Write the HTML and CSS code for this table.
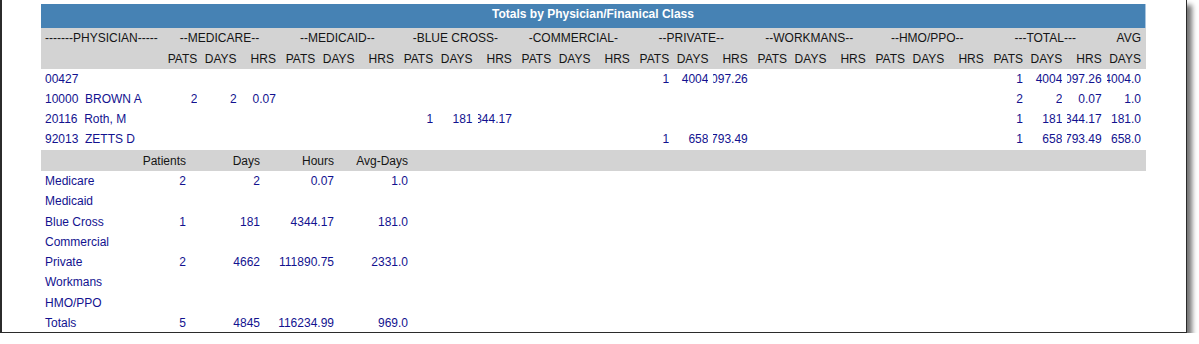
FILE: index.html
```html
<!DOCTYPE html>
<html>
<head>
<meta charset="utf-8">
<title>Totals by Physician/Finanical Class</title>
<link rel="stylesheet" href="styles.css">
</head>
<body>
<div class="frame">
  <div class="report">
    <div class="title">Totals by Physician/Finanical Class</div>
    <table class="main">
      <colgroup>
        <col class="phys">
        <col class="c"><col class="c"><col class="c">
        <col class="c"><col class="c"><col class="c">
        <col class="c"><col class="c"><col class="c">
        <col class="c"><col class="c"><col class="c">
        <col class="c"><col class="c"><col class="c">
        <col class="c"><col class="c"><col class="c">
        <col class="c"><col class="c"><col class="c">
        <col class="c"><col class="c"><col class="c">
        <col class="c">
      </colgroup>
      <thead>
        <tr class="h1">
          <th class="l">-------PHYSICIAN-----</th>
          <th colspan="3" class="g">--MEDICARE--</th>
          <th colspan="3" class="g">--MEDICAID--</th>
          <th colspan="3" class="g">-BLUE CROSS-</th>
          <th colspan="3" class="g">-COMMERCIAL-</th>
          <th colspan="3" class="g">--PRIVATE--</th>
          <th colspan="3" class="g">--WORKMANS--</th>
          <th colspan="3" class="g">--HMO/PPO--</th>
          <th colspan="3" class="g">---TOTAL---</th>
          <th class="r">AVG</th>
        </tr>
        <tr class="h2">
          <th></th>
          <th class="r">PATS</th><th class="r">DAYS</th><th class="r">HRS</th>
          <th class="r">PATS</th><th class="r">DAYS</th><th class="r">HRS</th>
          <th class="r">PATS</th><th class="r">DAYS</th><th class="r">HRS</th>
          <th class="r">PATS</th><th class="r">DAYS</th><th class="r">HRS</th>
          <th class="r">PATS</th><th class="r">DAYS</th><th class="r">HRS</th>
          <th class="r">PATS</th><th class="r">DAYS</th><th class="r">HRS</th>
          <th class="r">PATS</th><th class="r">DAYS</th><th class="r">HRS</th>
          <th class="r">PATS</th><th class="r">DAYS</th><th class="r">HRS</th>
          <th class="r">DAYS</th>
        </tr>
      </thead>
      <tbody>
        <tr>
          <td class="l">00427</td>
          <td></td><td></td><td></td>
          <td></td><td></td><td></td>
          <td></td><td></td><td></td>
          <td></td><td></td><td></td>
          <td class="r"><div class="n">1</div></td><td class="r"><div class="n">4004</div></td><td class="r"><div class="n">4097.26</div></td>
          <td></td><td></td><td></td>
          <td></td><td></td><td></td>
          <td class="r"><div class="n">1</div></td><td class="r"><div class="n">4004</div></td><td class="r"><div class="n">4097.26</div></td>
          <td class="r"><div class="n">4004.0</div></td>
        </tr>
        <tr>
          <td class="l">10000&nbsp; BROWN A</td>
          <td class="r"><div class="n">2</div></td><td class="r"><div class="n">2</div></td><td class="r"><div class="n">0.07</div></td>
          <td></td><td></td><td></td>
          <td></td><td></td><td></td>
          <td></td><td></td><td></td>
          <td></td><td></td><td></td>
          <td></td><td></td><td></td>
          <td></td><td></td><td></td>
          <td class="r"><div class="n">2</div></td><td class="r"><div class="n">2</div></td><td class="r"><div class="n">0.07</div></td>
          <td class="r"><div class="n">1.0</div></td>
        </tr>
        <tr>
          <td class="l">20116&nbsp; Roth, M</td>
          <td></td><td></td><td></td>
          <td></td><td></td><td></td>
          <td class="r"><div class="n">1</div></td><td class="r"><div class="n">181</div></td><td class="r"><div class="n">4344.17</div></td>
          <td></td><td></td><td></td>
          <td></td><td></td><td></td>
          <td></td><td></td><td></td>
          <td></td><td></td><td></td>
          <td class="r"><div class="n">1</div></td><td class="r"><div class="n">181</div></td><td class="r"><div class="n">4344.17</div></td>
          <td class="r"><div class="n">181.0</div></td>
        </tr>
        <tr>
          <td class="l">92013&nbsp; ZETTS D</td>
          <td></td><td></td><td></td>
          <td></td><td></td><td></td>
          <td></td><td></td><td></td>
          <td></td><td></td><td></td>
          <td class="r"><div class="n">1</div></td><td class="r"><div class="n">658</div></td><td class="r"><div class="n">107793.49</div></td>
          <td></td><td></td><td></td>
          <td></td><td></td><td></td>
          <td class="r"><div class="n">1</div></td><td class="r"><div class="n">658</div></td><td class="r"><div class="n">107793.49</div></td>
          <td class="r"><div class="n">658.0</div></td>
        </tr>
      </tbody>
    </table>
    <table class="summary">
      <colgroup>
        <col class="s"><col class="s"><col class="s"><col class="s"><col class="s"><col class="fill">
      </colgroup>
      <thead>
        <tr>
          <th></th><th class="r">Patients</th><th class="r">Days</th><th class="r">Hours</th><th class="r">Avg-Days</th><th></th>
        </tr>
      </thead>
      <tbody>
        <tr><td class="l">Medicare</td><td class="r">2</td><td class="r">2</td><td class="r">0.07</td><td class="r">1.0</td><td></td></tr>
        <tr><td class="l">Medicaid</td><td></td><td></td><td></td><td></td><td></td></tr>
        <tr><td class="l">Blue Cross</td><td class="r">1</td><td class="r">181</td><td class="r">4344.17</td><td class="r">181.0</td><td></td></tr>
        <tr><td class="l">Commercial</td><td></td><td></td><td></td><td></td><td></td></tr>
        <tr><td class="l">Private</td><td class="r">2</td><td class="r">4662</td><td class="r">111890.75</td><td class="r">2331.0</td><td></td></tr>
        <tr><td class="l">Workmans</td><td></td><td></td><td></td><td></td><td></td></tr>
        <tr><td class="l">HMO/PPO</td><td></td><td></td><td></td><td></td><td></td></tr>
        <tr><td class="l">Totals</td><td class="r">5</td><td class="r">4845</td><td class="r">116234.99</td><td class="r">969.0</td><td></td></tr>
      </tbody>
    </table>
  </div>
</div>
</body>
</html>
```
FILE: styles.css
```css
html, body {
  margin: 0;
  padding: 0;
  background: #ffffff;
}

body {
  font-family: "Liberation Sans", Arial, sans-serif;
  font-size: 12px;
}

.frame {
  box-sizing: border-box;
  width: 1187px;
  height: 333px;
  border-style: solid;
  border-color: #2b2b2b;
  border-width: 0 1px 1px 2px;
  box-shadow: 5px 5px 5px rgba(0, 0, 0, 0.55);
  padding: 4px 0 0 39px;
}

.report {
  width: 1105px;
}

.title {
  box-sizing: border-box;
  height: 24px;
  line-height: 21px;
  background: #4682b4;
  color: #ffffff;
  font-weight: bold;
  text-align: center;
  border-right: 1px solid #a9c5df;
}

table {
  border-collapse: collapse;
  border-spacing: 0;
  table-layout: fixed;
  width: 1105px;
}

th, td {
  padding: 0;
  white-space: nowrap;
  font-weight: normal;
  overflow: hidden;
}

col.phys { width: 122px; }
col.c { width: 39.32px; }
col.s { width: 74px; }
col.fill { width: auto; }

.main thead tr {
  background: #d3d3d3;
  color: #151515;
}

.main .h1 th { height: 20px; }
.main .h2 th { height: 21px; }

.main tbody td {
  height: 20px;
  color: #12128f;
}

.l {
  text-align: left;
  padding-left: 4px;
}

.main .r {
  text-align: right;
  padding-right: 5px;
}

.main .g {
  text-align: center;
  padding-right: 5px;
}

.n {
  display: flex;
  justify-content: flex-end;
  overflow: hidden;
  white-space: nowrap;
}

.summary {
  margin-top: 1px;
}

.summary thead tr {
  background: #d3d3d3;
  color: #151515;
}

.summary thead th { height: 21px; }

.summary tbody td {
  height: 20.25px;
  color: #12128f;
}

.summary .r {
  text-align: right;
  padding-right: 3px;
}
```
